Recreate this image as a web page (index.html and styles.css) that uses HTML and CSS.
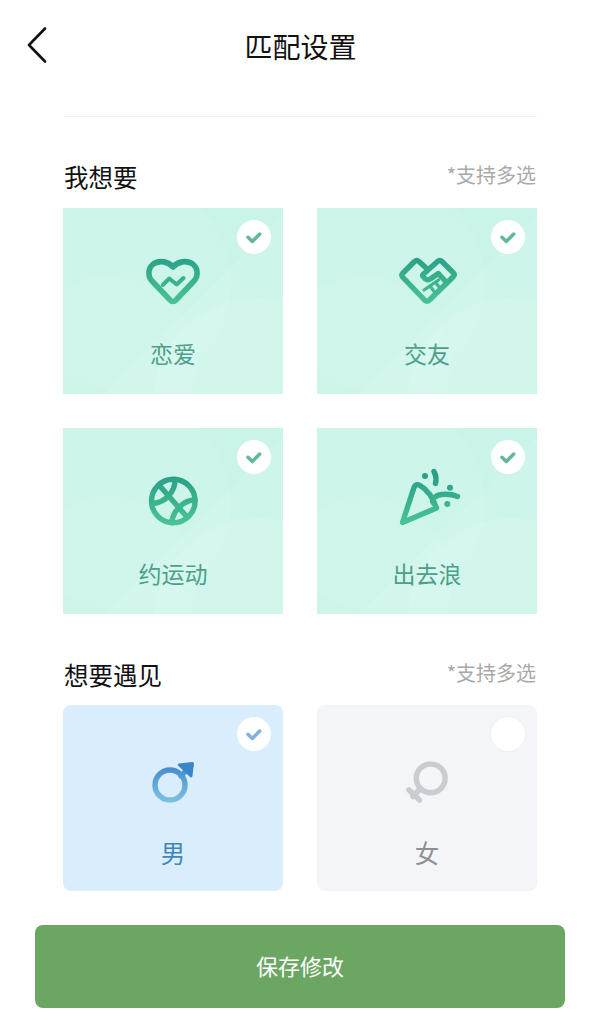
FILE: index.html
```html
<!DOCTYPE html>
<html lang="zh-CN">
<head>
    <meta charset="UTF-8">
    <meta name="viewport" content="width=device-width, initial-scale=1.0">
    <title>匹配设置</title>
    <link rel="stylesheet" href="styles.css">
</head>
<body>
    <svg class="defs" aria-hidden="true">
        <defs>
            <linearGradient id="mint" gradientUnits="userSpaceOnUse" x1="0" y1="6" x2="0" y2="56">
                <stop offset="0" stop-color="#2a9f88"/>
                <stop offset="1" stop-color="#4ac594"/>
            </linearGradient>
            <linearGradient id="sky" gradientUnits="userSpaceOnUse" x1="0" y1="15" x2="0" y2="56">
                <stop offset="0" stop-color="#3d85ca"/>
                <stop offset="1" stop-color="#7fc3e1"/>
            </linearGradient>
        </defs>
    </svg>

    <header class="topbar">
        <a class="back" href="#" aria-label="返回">
            <svg width="20" height="36" viewBox="0 0 20 36"><path d="M18 1.5 2 18l16 16.500" fill="none" stroke="#111" stroke-width="2.600" stroke-linecap="round" stroke-linejoin="round"/></svg>
        </a>
        <h1>匹配设置</h1>
    </header>

    <main class="content">
        <hr class="divider">

        <div class="section-head">
            <h2>我想要</h2>
            <span class="note">*支持多选</span>
        </div>
        <div class="cards">
            <div class="card mint">
                <span class="check"><svg width="34" height="34" viewBox="0 0 34 34"><path d="M11 17.300l4.300 4.200 7.400-7.500"/></svg></span>
                <svg class="icon" viewBox="0 0 64 64">
                    <path class="line heavy" d="M32 17C27 11.500 19 10 13 13.500 7 17.500 6 26 11.500 31.500L29 50c2 2 4 2 6 0l17.500-18.500C58 26 57 17.500 51 13.500 45 10 37 11.500 32 17Z"/>
                    <path class="line zig" d="M21.700 35l6.600-6.500 7.400 6L42.500 28"/>
                </svg>
                <span class="label">恋爱</span>
            </div>
            <div class="card mint">
                <span class="check"><svg width="34" height="34" viewBox="0 0 34 34"><path d="M11 17.300l4.300 4.200 7.400-7.500"/></svg></span>
                <svg class="icon" viewBox="0 0 64 64">
                    <path class="line" d="M31.700 18.500 24 11.500c-1.500-1.300-3-1.300-4.500 0L8 23c-1.500 1.500-1.500 3 0 4.500L29.500 50c1.700 1.500 3.300 1.500 5 0L58 27c1.500-1.500 1.500-3 0-4.500L47 11.500c-1.500-1.300-3-1.300-4.500 0l-14 12.500c-1.300 1.300-1.300 2 0 3 2.500 3.500 5 3.500 7.500 1.500l7.300-5L52 33"/>
                    <path class="line fine" d="M29 40 43.500 30M35 36l4.500 6M40.500 32.500 45 38"/>
                </svg>
                <span class="label">交友</span>
            </div>
            <div class="card mint">
                <span class="check"><svg width="34" height="34" viewBox="0 0 34 34"><path d="M11 17.300l4.300 4.200 7.400-7.500"/></svg></span>
                <svg class="icon" viewBox="0 0 64 64">
                    <circle class="line" cx="32.300" cy="31" r="21.800"/>
                    <path class="line" d="M18 15 46 47M34 9.500C34 22 25 32 12.300 33.500M54 30C43 30 32 40 30.700 52.800"/>
                </svg>
                <span class="label">约运动</span>
            </div>
            <div class="card mint">
                <span class="check"><svg width="34" height="34" viewBox="0 0 34 34"><path d="M11 17.300l4.300 4.200 7.400-7.500"/></svg></span>
                <svg class="icon" viewBox="0 0 64 64">
                    <path class="line" d="M7.500 52.500 19 17.500c1-3 3.500-3.500 6-2 7 4 13 12.500 16.500 22.500Z"/>
                    <path class="line" d="M39 1.500c2 4 2.500 8 1.500 12M62.500 26.500C55 23.500 45 23.500 40 27c-3 2-3 5-1 6.500"/>
                    <circle class="dot" cx="30" cy="6" r="3"/>
                    <circle class="dot" cx="55" cy="17.700" r="3"/>
                    <circle class="dot" cx="52.300" cy="34" r="3"/>
                </svg>
                <span class="label">出去浪</span>
            </div>
        </div>

        <div class="section-head second">
            <h2>想要遇见</h2>
            <span class="note">*支持多选</span>
        </div>
        <div class="cards">
            <div class="card male">
                <span class="check"><svg width="34" height="34" viewBox="0 0 34 34"><path d="M11 17.300l4.300 4.200 7.400-7.500"/></svg></span>
                <svg class="icon" viewBox="0 0 64 64">
                    <circle class="line" cx="29" cy="38" r="15"/>
                    <path class="line" d="M40 29l10-10.500"/>
                    <path class="dot" d="M38 16.500 51 15c1.200-.1 1.900.6 1.800 1.800L51.500 29c-.2 1.500-1.800 1.800-2.700.8l-11.600-11c-.9-.9-.5-2.100.8-2.300Z"/>
                </svg>
                <span class="label">男</span>
            </div>
            <div class="card female">
                <span class="check off"></span>
                <svg class="icon" viewBox="0 0 64 64">
                    <circle class="line" cx="35.700" cy="31.300" r="14.400"/>
                    <path class="line" d="M25.500 41.500 18 49.500M14 43l10.500 10"/>
                </svg>
                <span class="label">女</span>
            </div>
        </div>
    </main>

    <footer class="actions">
        <button class="save">保存修改</button>
    </footer>
</body>
</html>
```

FILE: styles.css
```css
* {
    box-sizing: border-box;
}
body {
    margin: 0;
    background: #fff;
    font-family: "Noto Sans CJK SC", "Noto Sans", sans-serif;
    color: #111;
}
.defs {
    display: block;
    width: 0;
    height: 0;
}

.topbar {
    height: 94px;
    display: grid;
    grid-template-columns: 1fr auto 1fr;
    align-items: center;
}
.topbar h1 {
    grid-column: 2;
    grid-row: 1;
    margin: -2px 0 0;
    font-size: 28px;
    font-weight: 400;
    line-height: 40px;
}
.back {
    grid-column: 1;
    grid-row: 1;
    display: block;
    width: 20px;
    height: 36px;
    margin-left: 27px;
    margin-top: -4px;
}
.back svg {
    display: block;
}

.content {
    padding: 0 64px 0 63px;
}
.divider {
    height: 1px;
    margin: 22px 0 44px 1px;
    border: 0;
    background: #f1f1f1;
}
.section-head {
    display: flex;
    justify-content: space-between;
    align-items: flex-start;
    height: 34px;
    margin-bottom: 13px;
}
.section-head.second {
    margin-top: 45px;
    margin-bottom: 12px;
}
.section-head h2 {
    margin: -1px 0 0 1px;
    font-size: 24.500px;
    font-weight: 400;
    line-height: 34px;
}
.note {
    margin-right: 1px;
    font-size: 20px;
    line-height: 27px;
    color: #a9a9a9;
}

.cards {
    display: grid;
    grid-template-columns: 1fr 1fr;
    gap: 34px;
}
.card {
    position: relative;
    height: 186px;
    display: flex;
    flex-direction: column;
    align-items: center;
    padding-top: 42px;
}
.card.mint {
    background:
        linear-gradient(135deg, rgba(255,255,255,0) 56%, rgba(255,255,255,.07) 56.2%),
        radial-gradient(circle 105px at 195px 195px, rgba(255,255,255,.09) 99.5%, rgba(255,255,255,0) 100%),
        radial-gradient(circle 87px at 47px 155px, rgba(255,255,255,.06) 99.5%, rgba(255,255,255,0) 100%),
        radial-gradient(circle 108px at 60px 75px, rgba(255,255,255,.05) 99.5%, rgba(255,255,255,0) 100%),
        #caf4e9;
    --label: #4d9f8b;
    --check: #62b89d;
}
.card.male {
    background: #daedfd;
    border-radius: 8px;
    --label: #3f87ba;
    --check: #7fb2dc;
}
.card.female {
    background: #f4f5f9;
    border-radius: 8px;
    --label: #8e9095;
}

.check {
    position: absolute;
    top: 12px;
    right: 12px;
    width: 34px;
    height: 34px;
    border-radius: 50%;
    background: #fff;
}
.check svg {
    display: block;
}
.check path {
    fill: none;
    stroke: var(--check);
    stroke-width: 3.500;
    stroke-linecap: round;
    stroke-linejoin: round;
}
.check.off {
    box-shadow: 0 0 0 1px #eef0f3;
}

.icon {
    display: block;
    width: 64px;
    height: 64px;
    overflow: visible;
}
.line {
    fill: none;
    stroke-width: 5.400;
    stroke-linecap: round;
    stroke-linejoin: round;
}
.line.heavy {
    stroke-width: 5.600;
}
.line.zig {
    stroke-width: 4;
}
.line.fine {
    stroke-width: 3.200;
}
.mint .line {
    stroke: url(#mint);
}
.mint .dot {
    fill: url(#mint);
}
.male .line {
    stroke: url(#sky);
}
.male .dot {
    fill: #3d85ca;
}
.female .line {
    stroke: #c9ccd1;
    stroke-width: 5.500;
}

.label {
    margin-top: 24px;
    font-size: 23px;
    line-height: 30px;
    color: var(--label);
}
.male .label,
.female .label {
    margin-top: 27px;
    font-size: 24.500px;
}

.actions {
    padding: 34px 36px 0 35px;
}
.save {
    display: block;
    width: 100%;
    height: 83px;
    padding: 0 0 3px;
    border: 0;
    border-radius: 8px;
    background: #6ba763;
    color: #fff;
    font-family: inherit;
    font-size: 22px;
}
```
